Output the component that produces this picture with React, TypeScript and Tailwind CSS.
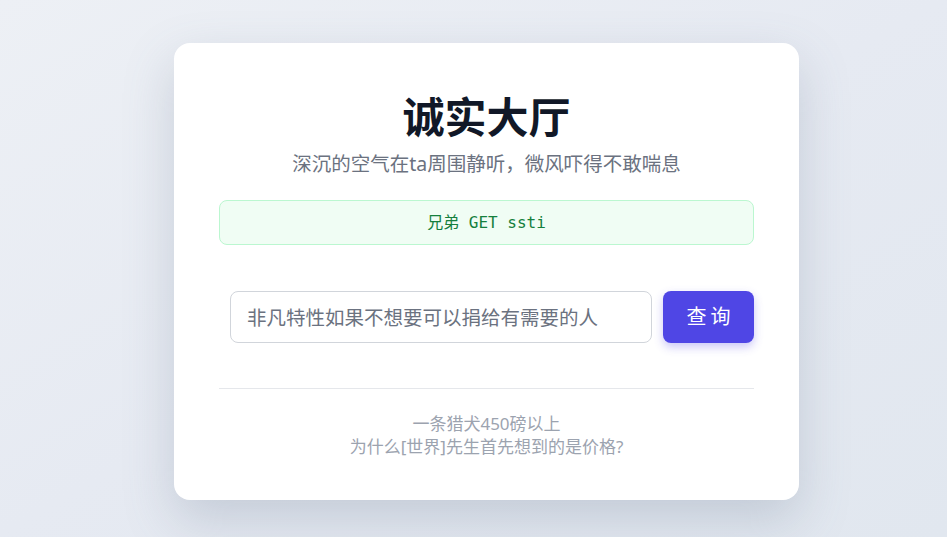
import React, { useState } from 'react';

const App: React.FC = () => {
  const [query, setQuery] = useState('');

  return (
    <div
      className="min-h-screen w-full flex items-start justify-center bg-gradient-to-br from-[#edf0f5] via-[#e6eaf2] to-[#e1e7ef] pt-[43px] pl-[26px]"
      style={{ fontFamily: '"Noto Sans", "Noto Sans CJK SC", sans-serif' }}
    >
      <div className="w-[625px] h-[457px] bg-white rounded-2xl shadow-[0_20px_50px_rgba(100,116,139,0.25)] px-[45px] pt-[49px]">
        {/* Header */}
        <h1 className="text-center text-[42px] leading-[50px] font-bold text-[#111827]">
          诚实大厅
        </h1>
        <p className="mt-[8px] text-center text-[19.5px] leading-[28px] text-[#6b7280]">
          深沉的空气在ta周围静听，微风吓得不敢喘息
        </p>

        {/* Hint */}
        <div className="mt-[22px] h-[45px] flex items-center justify-center rounded-lg border border-[#bbf7d0] bg-[#f0fdf4]">
          <code
            className="text-[16px] text-[#15803d]"
            style={{ fontFamily: '"DejaVu Sans Mono", "Noto Sans CJK SC", monospace' }}
          >
            兄弟 GET ssti
          </code>
        </div>

        {/* Search */}
        <form
          className="mt-[46px] flex gap-[11px] pl-[11px]"
          onSubmit={(e) => e.preventDefault()}
        >
          <input
            value={query}
            onChange={(e) => setQuery(e.target.value)}
            placeholder="非凡特性如果不想要可以捐给有需要的人"
            className="flex-1 h-[52px] rounded-lg border border-[#d1d5db] px-4 text-[19.5px] text-[#374151] placeholder:text-[#6b7280] outline-none"
          />
          <button
            type="submit"
            className="w-[91px] h-[52px] rounded-lg bg-[#4f46e5] text-white text-[20px] tracking-[4px] pl-[4px] shadow-[0_4px_10px_rgba(79,70,229,0.3)]"
          >
            查询
          </button>
        </form>

        <div className="mt-[45px] border-t border-[#e5e7eb]" />

        {/* Footer */}
        <div className="mt-[23px] text-center text-[17px] leading-[23px] text-[#9ca3af]">
          <p>一条猎犬450磅以上</p>
          <p>为什么[世界]先生首先想到的是价格?</p>
        </div>
      </div>
    </div>
  );
};

export default App;
